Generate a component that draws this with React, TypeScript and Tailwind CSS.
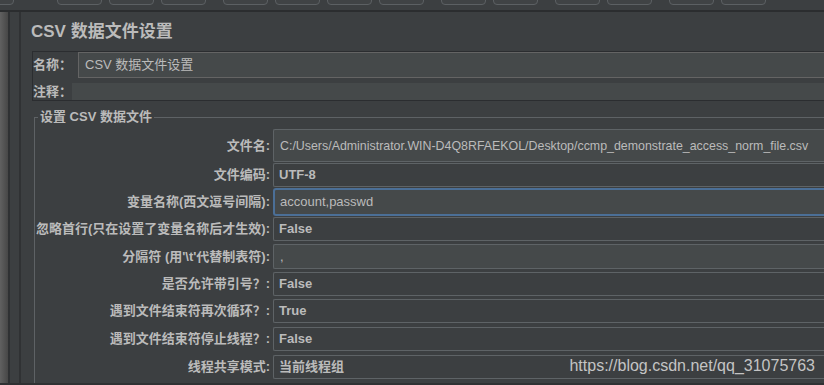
import React from "react";

const toolbarGaps = [
  "-ml-[31px]",
  "ml-[43px]",
  "ml-[7px]",
  "ml-[7px]",
  "ml-[17px]",
  "ml-[7px]",
  "ml-[7px]",
  "ml-[7px]",
  "ml-[17px]",
  "ml-[7px]",
  "ml-[17px]",
  "ml-[7px]",
  "ml-[17px]",
  "ml-[7px]",
];

type Row = {
  label: string;
  value: string;
  kind: "text" | "combo" | "focus";
  rowClass: string;
  textSize?: string;
};

const rows: Row[] = [
  {
    label: "文件名:",
    value: "C:/Users/Administrator.WIN-D4Q8RFAEKOL/Desktop/ccmp_demonstrate_access_norm_file.csv",
    kind: "text",
    rowClass: "h-[33px] mt-0",
    textSize: "text-[12.4px]",
  },
  { label: "文件编码:", value: "UTF-8", kind: "combo", rowClass: "h-[24px] mt-[1px]" },
  { label: "变量名称(西文逗号间隔):", value: "account,passwd", kind: "focus", rowClass: "h-[28px] mt-[1px]" },
  { label: "忽略首行(只在设置了变量名称后才生效):", value: "False", kind: "combo", rowClass: "h-[24px] mt-[1px]" },
  { label: "分隔符 (用'\\t'代替制表符):", value: ",", kind: "text", rowClass: "h-[25px] mt-[3px]" },
  { label: "是否允许带引号？:", value: "False", kind: "combo", rowClass: "h-[24px] mt-[3px]" },
  { label: "遇到文件结束符再次循环？:", value: "True", kind: "combo", rowClass: "h-[24px] mt-[3px]" },
  { label: "遇到文件结束符停止线程？:", value: "False", kind: "combo", rowClass: "h-[24px] mt-[4px]" },
  { label: "线程共享模式:", value: "当前线程组", kind: "combo", rowClass: "h-[24px] mt-[4px]" },
];

function Field({ row }: { row: Row }) {
  const size = row.textSize ?? "text-[13px]";
  if (row.kind === "combo") {
    return (
      <div className={`flex-1 h-full flex items-center pl-[5px] bg-[#3c3f41] border border-r-0 border-[#5e6366] rounded-l-[2px] font-bold ${size} leading-[16px] text-[#bbbbbb] whitespace-nowrap overflow-hidden`}>
        {row.value}
      </div>
    );
  }
  if (row.kind === "focus") {
    return (
      <div className={`flex-1 h-full flex items-center pl-[5px] bg-[#45494a] border-2 border-r-0 border-[#4b6f97] rounded-l-[3px] ${size} leading-[16px] text-[#bbbbbb] whitespace-nowrap overflow-hidden`}>
        {row.value}
      </div>
    );
  }
  return (
    <div className={`flex-1 h-full flex items-center pl-[6px] bg-[#45494a] border border-r-0 border-[#5e6366] rounded-l-[2px] ${size} leading-[16px] text-[#bbbbbb] whitespace-nowrap overflow-hidden`}>
      {row.value}
    </div>
  );
}

export default function App() {
  return (
    <div className="relative w-[824px] h-[385px] overflow-hidden bg-[#3c3f41] flex flex-col font-[family-name:'Liberation_Sans','Noto_Sans_CJK_SC',sans-serif] text-[#bbbbbb]">
      {/* toolbar (only the lower edge of the buttons is visible) */}
      <div className="h-[10px] shrink-0 flex items-end pb-[5px] overflow-hidden">
        {toolbarGaps.map((gap, i) => (
          <div
            key={i}
            className={`${gap} w-[45px] h-[14px] shrink-0 rounded-[4px] border border-[#5c6063] bg-[#404345]`}
          />
        ))}
      </div>
      <div className="h-[2px] shrink-0 bg-[#2b2d2f]" />

      <div className="flex flex-1 min-h-0">
        {/* left tree edge */}
        <div className="w-[8px] shrink-0 bg-gradient-to-r from-[#616161] to-[#474747]" />
        <div className="w-[2px] shrink-0 bg-[#2f3133]" />
        <div className="w-[9px] shrink-0 bg-[#3c3f41]" />
        <div className="w-[2px] shrink-0 bg-[#303234]" />

        {/* main panel */}
        <div className="flex-1 min-w-0 flex flex-col pl-[10px]">
          <h1 className="mt-[10px] text-[17px] leading-[20px] font-bold text-[#bbbbbb]">
            CSV 数据文件设置
          </h1>

          {/* name / comment */}
          <div className="mt-[9px] ml-[1px] h-[50px] border border-r-0 border-[#2b2d30] flex flex-col">
            <div className="flex items-center h-[26px]">
              <span className="w-[45px] shrink-0 text-[13px] leading-[16px] font-bold">名称：</span>
              <div className="flex-1 h-full flex items-center pl-[6px] bg-[#45494a] border border-r-0 border-[#646464] text-[13px] leading-[16px]">
                CSV 数据文件设置
              </div>
            </div>
            <div className="flex items-center h-[17px] mt-[5px]">
              <span className="w-[39px] shrink-0 text-[13px] leading-[16px] font-bold">注释：</span>
              <div className="flex-1 h-full bg-[#45494a]" />
            </div>
          </div>

          {/* CSV settings group */}
          <fieldset className="mt-[9px] ml-[3px] flex-1 min-w-0 border-t border-l border-[#5e6265] pt-[5px]">
            <legend className="ml-[3px] px-[2px] text-[13px] leading-[14px] font-bold text-[#bbbbbb]">
              设置 CSV 数据文件
            </legend>
            {rows.map((row) => (
              <div key={row.label} className={`flex items-center ${row.rowClass}`}>
                <span className="w-[235px] shrink-0 text-right text-[13px] leading-[16px] font-bold whitespace-nowrap">
                  {row.label}
                </span>
                <div className="ml-[3px] flex-1 min-w-0 h-full flex">
                  <Field row={row} />
                </div>
              </div>
            ))}
          </fieldset>
        </div>
      </div>
      <div className="h-[2px] shrink-0 bg-[#2f3133]" />

      {/* blog watermark */}
      <div className="absolute right-[9px] bottom-[10px] text-[16px] leading-[18px] text-[#c4c4c4] font-[family-name:'Liberation_Sans',sans-serif]">
        https://blog.csdn.net/qq_31075763
      </div>
    </div>
  );
}
